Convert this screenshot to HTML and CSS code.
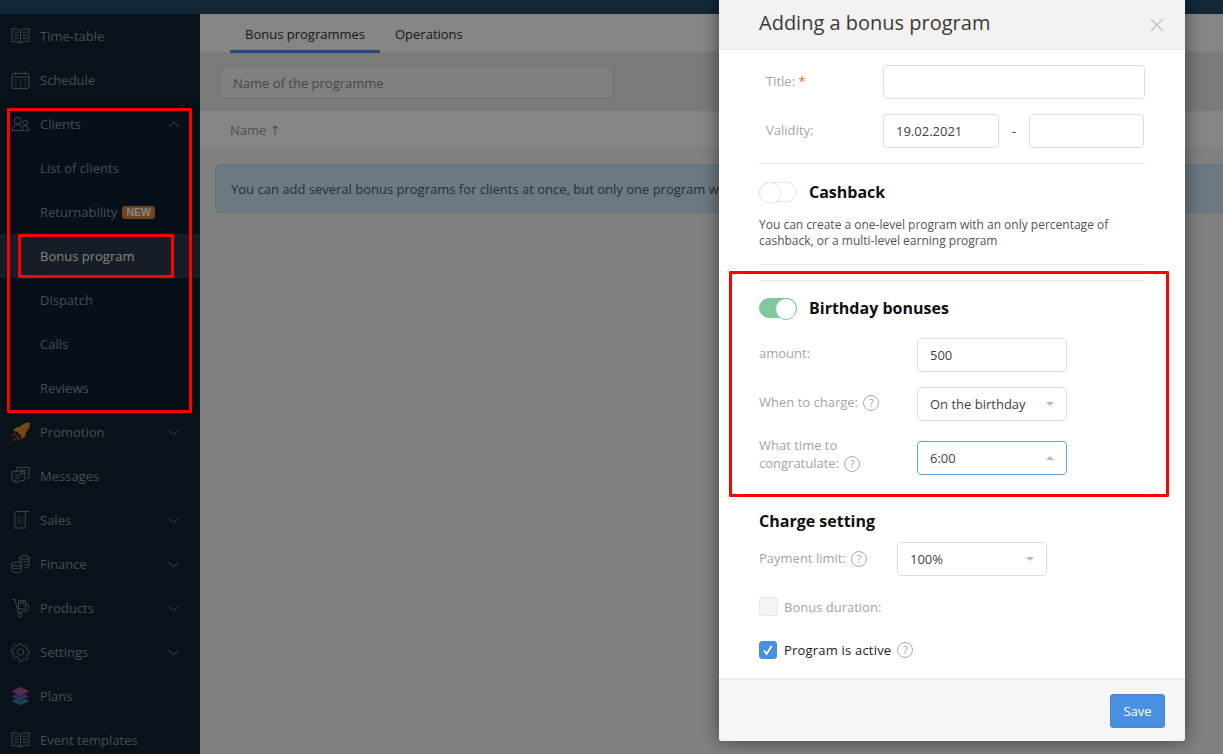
FILE: index.html
```html
<!DOCTYPE html>
<html lang="en">
<head>
    <meta charset="UTF-8">
    <title>Adding a bonus program</title>
    <link rel="stylesheet" href="styles.css">
</head>
<body>
    <div class="topbar"></div>
    <div class="layout">
        <nav class="sidebar">
            <a class="nav-item">
                <svg class="nav-icon" viewBox="0 0 20 18"><path d="M10 3C8 1.500 4 1 1 1.500V15c3-.5 7 0 9 1.500 2-1.500 6-2 9-1.500V1.500C16 1 12 1.500 10 3zM10 3v13.500M3 5h5M3 8h5M3 11h5M12 5h5M12 8h5M12 11h5"/></svg>
                <span>Time-table</span>
            </a>
            <a class="nav-item">
                <svg class="nav-icon" viewBox="0 0 20 20"><rect x="1" y="3" width="18" height="16" rx="2"/><path d="M1 7h18M5 1v4M15 1v4M4 10h2M9 10h2M14 10h2M4 13h2M9 13h2M14 13h2M4 16h2M9 16h2M14 16h2"/></svg>
                <span>Schedule</span>
            </a>
            <div class="nav-group">
                <a class="nav-item">
                    <svg class="nav-icon" viewBox="0 0 20 16"><circle cx="7" cy="4.500" r="3.500"/><path d="M1 15c0-4 2.500-6 6-6s6 2 6 6zM14 15h5c0-3-1.500-5-4-5-1 0-1.800.300-2.500.800"/><circle cx="15" cy="6.500" r="2.500"/></svg>
                    <span>Clients</span>
                    <svg class="chevron" viewBox="0 0 12 7"><path d="M1 6l5-5 5 5"/></svg>
                </a>
                <a class="nav-item">
                    <span>List of clients</span>
                </a>
                <a class="nav-item">
                    <span>Returnability</span>
                    <span class="badge">NEW</span>
                </a>
                <a class="nav-item active">
                    <span>Bonus program</span>
                </a>
                <a class="nav-item">
                    <span>Dispatch</span>
                </a>
                <a class="nav-item">
                    <span>Calls</span>
                </a>
                <a class="nav-item">
                    <span>Reviews</span>
                </a>
            </div>
            <a class="nav-item">
                <svg class="nav-icon rocket" viewBox="0 0 20 20"><path class="rocket-body" d="M20 0c-4.500 0-8 1.500-10.500 4.500L5.500 5 2 9l4 .5 4.500 4.500.5 4 4-3.500.5-4C18.500 8 20 4.500 20 0z"/><path class="rocket-tail" d="M5 11.500l-4 2.500M7.500 13.500l-5 6M9 15.500l-2.500 3.500"/></svg>
                <span>Promotion</span>
                <svg class="chevron" viewBox="0 0 12 7"><path d="M1 1l5 5 5-5"/></svg>
            </a>
            <a class="nav-item">
                <svg class="nav-icon" viewBox="0 0 20 20"><path d="M6 5V1h13v11h-3M3 5h11v10H8l-3 3v-3H1V5zM9 4h7M9 7h7M4 9h7M4 12h5"/></svg>
                <span>Messages</span>
            </a>
            <a class="nav-item">
                <svg class="nav-icon" viewBox="0 0 20 20"><path d="M19 1H6C4.500 1 4 2 4 3v16l2-1 1.500 1L9 18l1.500 1 1.500-1 1.500 1 1.500-1V3c0-1 1-2 2-2h2zM7 7h3M7 10h3M7 13h3M12 7h1M12 10h1M12 13h1"/></svg>
                <span>Sales</span>
                <svg class="chevron" viewBox="0 0 12 7"><path d="M1 1l5 5 5-5"/></svg>
            </a>
            <a class="nav-item">
                <svg class="nav-icon" viewBox="0 0 20 20"><ellipse cx="14" cy="3" rx="5" ry="2"/><path d="M9 3v3c0 1 2 2 5 2s5-1 5-2V3M19 6v3c0 1-2 2-5 2M19 9v3c0 1-2 2-5 2"/><ellipse cx="6" cy="10" rx="5" ry="2"/><path d="M1 10v7c0 1 2 2 5 2s5-1 5-2v-7M1 13c0 1 2 2 5 2s5-1 5-2"/></svg>
                <span>Finance</span>
                <svg class="chevron" viewBox="0 0 12 7"><path d="M1 1l5 5 5-5"/></svg>
            </a>
            <a class="nav-item">
                <svg class="nav-icon" viewBox="0 0 20 20"><path d="M1 1h3l4 14 11-3"/><circle cx="9" cy="17.500" r="2"/><path d="M8 2h7v9H8zM10 2v3h3V2M15 6h3l1 5"/></svg>
                <span>Products</span>
                <svg class="chevron" viewBox="0 0 12 7"><path d="M1 1l5 5 5-5"/></svg>
            </a>
            <a class="nav-item">
                <svg class="nav-icon" viewBox="0 0 20 20"><circle cx="10" cy="10" r="3.500"/><path d="M8.500 1h3l.5 2.500 2 .9 2.200-1.400 2 2-1.400 2.200.9 2 2.300.3v3l-2.300.5-.9 2 1.400 2.200-2 2-2.200-1.400-2 .9-.5 2.300h-3L8 16.500l-2-.9L3.800 17l-2-2 1.400-2.200-.9-2L0 10.500v-3l2.300-.3.9-2L1.800 3l2-2L6 3.400 8 2.500z" transform="translate(.5 .3) scale(.95)"/></svg>
                <span>Settings</span>
                <svg class="chevron" viewBox="0 0 12 7"><path d="M1 1l5 5 5-5"/></svg>
            </a>
            <a class="nav-item">
                <svg class="nav-icon plans" viewBox="0 0 20 20"><path class="layer-teal" d="M10 11l10 4-10 5-10-5z"/><path class="layer-blue" d="M10 6l10 4.500-10 5-10-5z"/><path class="layer-purple" d="M10 0l10 5-10 5.500L0 5z"/></svg>
                <span>Plans</span>
            </a>
            <a class="nav-item">
                <svg class="nav-icon" viewBox="0 0 20 18"><path d="M10 3C8 1.500 4 1 1 1.500V15c3-.5 7 0 9 1.500 2-1.500 6-2 9-1.500V1.500C16 1 12 1.500 10 3zM10 3v13.500M3 5h5M3 8h5M3 11h5M12 5h5M12 8h5M12 11h5"/></svg>
                <span>Event templates</span>
            </a>
        </nav>

        <main class="content">
            <div class="tabs">
                <a class="tab tab-active">Bonus programmes</a>
                <a class="tab">Operations</a>
            </div>
            <div class="filters">
                <input class="search" placeholder="Name of the programme">
            </div>
            <div class="table-head">Name <span class="sort-arrow">↑</span></div>
            <div class="alert">You can add several bonus programs for clients at once, but only one program w</div>
        </main>
    </div>

    <div class="backdrop"></div>

    <div class="marker marker-clients"></div>
    <div class="marker marker-bonus"></div>

    <section class="modal">
        <header class="modal-header">
            <h2>Adding a bonus program</h2>
            <svg class="close" viewBox="0 0 14 14"><path d="M1 1l12 12M13 1L1 13"/></svg>
        </header>
        <div class="modal-body">
            <div class="form-row">
                <label class="top-label">Title: <span class="required">*</span></label>
                <input class="field field-wide">
            </div>
            <div class="form-row row-validity">
                <label class="top-label">Validity:</label>
                <input class="field field-date" value="19.02.2021">
                <span class="dash">-</span>
                <input class="field field-date-to">
            </div>
            <hr class="divider">
            <div class="switch-row">
                <span class="toggle"></span>
                <h3>Cashback</h3>
            </div>
            <p class="hint">You can create a one-level program with an only percentage of cashback, or a multi-level earning program</p>
            <hr class="divider">
            <hr class="divider">
            <div class="switch-row switch-birthday">
                <span class="toggle toggle-on"></span>
                <h3>Birthday bonuses</h3>
            </div>
            <div class="form-row row-first">
                <label class="side-label">amount:</label>
                <input class="field field-mid" value="500">
            </div>
            <div class="form-row row-next">
                <label class="side-label">When to charge: <span class="help">?</span></label>
                <div class="select">On the birthday<span class="caret"></span></div>
            </div>
            <div class="form-row row-time">
                <label class="side-label label-double">What time to congratulate: <span class="help">?</span></label>
                <div class="select select-open">6:00<span class="caret caret-up"></span></div>
            </div>
            <h3 class="section-title">Charge setting</h3>
            <div class="form-row row-limit">
                <label class="side-label label-limit">Payment limit: <span class="help">?</span></label>
                <div class="select">100%<span class="caret"></span></div>
            </div>
            <div class="check-row check-duration">
                <span class="checkbox"></span>
                <span class="check-muted">Bonus duration:</span>
            </div>
            <div class="check-row check-active">
                <span class="checkbox checkbox-on">
                    <svg viewBox="0 0 18 18"><path d="M4.500 9.500l3 4 5.500-9"/></svg>
                </span>
                <span class="check-strong">Program is active</span>
                <span class="help">?</span>
            </div>
        </div>
        <footer class="modal-footer">
            <button class="btn-save">Save</button>
        </footer>
    </section>

    <div class="marker marker-birthday"></div>
</body>
</html>
```

FILE: styles.css
```css
* {
    box-sizing: border-box;
}
html, body {
    height: 100%;
}
body {
    margin: 0;
    overflow: hidden;
    background-color: #f6f6f6;
    color: #444;
    font-family: "Open Sans", sans-serif;
    font-size: 13px;
}
.topbar {
    height: 14px;
    background-color: #264b6a;
}
.layout {
    display: flex;
    height: 740px;
}

/* sidebar */
.sidebar {
    width: 200px;
    flex-shrink: 0;
    background-color: #11232f;
    overflow: hidden;
}
.nav-group {
    background-color: #0a2030;
}
.nav-item {
    display: flex;
    align-items: center;
    height: 44px;
    padding: 0 20px 0 40px;
    position: relative;
    color: #8a939c;
}
.nav-item.active {
    background-color: #2c3849;
    color: #f8f8ee;
}
.nav-icon {
    position: absolute;
    left: 11px;
    top: 12px;
    width: 19px;
    height: 20px;
    fill: none;
    stroke: #7d8a94;
    stroke-width: 1;
}
.rocket-body {
    fill: #e08a30;
    stroke: none;
}
.rocket-tail {
    stroke: #c04a30;
    stroke-width: 1.500;
}
.plans path {
    stroke: #11232f;
    stroke-width: .6;
}
.layer-purple {
    fill: #a3558f;
}
.layer-blue {
    fill: #5f5fb5;
}
.layer-teal {
    fill: #2f8fa8;
}
.chevron {
    width: 13px;
    height: 7px;
    margin-left: auto;
    fill: none;
    stroke: #7d8a94;
}
.badge {
    margin-left: 5px;
    padding: 0 4px;
    border-radius: 3px;
    background-color: #d4833e;
    color: #fff;
    font-family: "Liberation Sans", sans-serif;
    font-size: 10.500px;
    font-weight: bold;
    line-height: 13px;
}

/* content under the dialog */
.content {
    flex: 1;
    min-width: 0;
}
.tabs {
    display: flex;
    height: 39px;
    padding-left: 30px;
    background-color: #fff;
    border-bottom: 1px solid #eee;
}
.tab {
    height: 39px;
    padding: 0 15px;
    line-height: 40px;
    color: #333;
}
.tab-active {
    border-bottom: 3px solid #4a90e2;
}
.filters {
    height: 58px;
    padding: 13px 20px 0;
    background-color: #eaeae6;
}
.search {
    display: block;
    width: 393px;
    height: 33px;
    padding: 0 12px;
    background-color: #f6f6f4;
    border: 1px solid #dcdfe6;
    border-radius: 4px;
    font-family: inherit;
    font-size: 13px;
}
.search::placeholder {
    color: #888;
}
.table-head {
    height: 38px;
    padding-left: 30px;
    line-height: 38px;
    background-color: #fff;
    border-bottom: 1px solid #f2f2f2;
    color: #999;
}
.sort-arrow {
    font-family: "DejaVu Sans", sans-serif;
}
.alert {
    margin: 15px -5px 0 15px;
    height: 49px;
    padding: 0 15px;
    line-height: 49px;
    white-space: nowrap;
    overflow: hidden;
    background-color: #d2e9f5;
    border: 1px solid #bcdde9;
    border-radius: 4px;
    color: #31607f;
}

.backdrop {
    position: absolute;
    inset: 0;
    background-color: rgba(0, 0, 0, .48);
}

/* dialog */
.modal {
    position: absolute;
    top: 0;
    left: 719px;
    width: 466px;
    height: 741px;
    display: flex;
    flex-direction: column;
    background-color: #fff;
    border-radius: 0 0 3px 3px;
    box-shadow: 0 0 18px rgba(0, 0, 0, .5);
}
.modal-header {
    height: 50px;
    flex-shrink: 0;
    display: flex;
    align-items: center;
    justify-content: space-between;
    padding: 0 21px 4px 40px;
    background-color: #f3f2f1;
    border-bottom: 1px solid #e6e6e6;
}
.modal-header h2 {
    margin: 0;
    font-size: 20px;
    font-weight: 400;
    color: #3a3a3a;
}
.close {
    width: 14px;
    height: 14px;
    margin-top: 5px;
    fill: none;
    stroke: #c6c6c6;
    stroke-width: 1.500;
}
.modal-body {
    flex: 1;
    padding: 15px 40px 0;
}
.modal-footer {
    height: 63px;
    flex-shrink: 0;
    display: flex;
    justify-content: flex-end;
    padding: 14px 20px 0;
    background-color: #f6f6f6;
    border-top: 2px solid #e9eef2;
    border-radius: 0 0 3px 3px;
}
.btn-save {
    width: 55px;
    height: 34px;
    background-color: #4a90e2;
    border: 1px solid #4785cf;
    border-radius: 3px;
    color: #fff;
    font-family: inherit;
    font-size: 13px;
}

.form-row {
    display: flex;
    align-items: center;
}
.row-validity {
    margin-top: 15px;
}
.row-first {
    margin-top: 20px;
}
.row-next {
    margin-top: 15px;
}
.row-time {
    margin-top: 20px;
}
.row-limit {
    margin-top: 11px;
}
.top-label {
    width: 124px;
    padding: 0 0 2px 7px;
    color: #a2a6ad;
}
.required {
    color: #f26522;
}
.side-label {
    width: 158px;
    padding-bottom: 5px;
    line-height: 18px;
    color: #a2a6ad;
}
.label-double {
    margin: -6px 0;
    padding: 0 30px 8px 0;
}
.label-limit {
    width: 138px;
    padding-bottom: 3px;
}
.field {
    height: 34px;
    padding: 0 12px;
    background-color: #fff;
    border: 1px solid #d8dde6;
    border-radius: 4px;
    color: #444;
    font-family: inherit;
    font-size: 13px;
}
.field-wide {
    width: 262px;
}
.field-date {
    width: 116px;
}
.dash {
    width: 30px;
    text-align: center;
}
.field-date-to {
    width: 115px;
}
.field-mid {
    width: 150px;
}
.select {
    position: relative;
    width: 150px;
    height: 34px;
    padding: 0 12px;
    line-height: 32px;
    border: 1px solid #d8dde6;
    border-radius: 4px;
}
.select-open {
    border-color: #5fa6e6;
}
.caret {
    position: absolute;
    right: 12px;
    top: 14px;
    border-left: 4px solid transparent;
    border-right: 4px solid transparent;
    border-top: 4px solid #b4bccb;
}
.caret-up {
    top: 14px;
    border-top: 0;
    border-bottom: 4px solid #b4bccb;
}
.help {
    display: inline-block;
    width: 16px;
    height: 16px;
    margin-left: 2px;
    border: 1px solid #a9adb4;
    border-radius: 50%;
    color: #a2a6ad;
    font-size: 11px;
    line-height: 14px;
    text-align: center;
}
.divider {
    margin: 15px 0 0;
    border: 0;
    border-top: 1px solid #e8e8e8;
}
.switch-row {
    display: flex;
    align-items: center;
    gap: 12px;
    margin-top: 18px;
}
.switch-birthday {
    margin-top: 17px;
}
.switch-row h3, .section-title {
    margin: 0;
    font-size: 16px;
    font-weight: 700;
    line-height: 20px;
    color: #111;
}
.section-title {
    margin-top: 36px;
}
.toggle {
    position: relative;
    width: 38px;
    height: 20px;
    background-color: #fff;
    border: 1px solid #dfe3e8;
    border-radius: 10px;
}
.toggle::after {
    content: "";
    position: absolute;
    left: -1px;
    top: -1px;
    width: 20px;
    height: 20px;
    background-color: #fff;
    border: 1px solid #dfe3e8;
    border-radius: 50%;
}
.toggle-on {
    background-color: #7dcb9d;
    border-color: #7dcb9d;
}
.toggle-on::after {
    left: auto;
    right: -1px;
    border-color: #7dcb9d;
}
.hint {
    margin: 15px 0 0;
    font-size: 12px;
    line-height: 16px;
    color: #555;
}
.check-row {
    display: flex;
    align-items: center;
    gap: 6px;
    color: #222;
}
.check-duration {
    margin-top: 21px;
}
.check-active {
    margin-top: 25px;
}
.check-muted {
    color: #a2a6ad;
}
.check-strong {
    letter-spacing: .2px;
}
.check-active .help {
    margin-left: 0;
}
.checkbox {
    width: 19px;
    height: 19px;
    background-color: #f2f4f7;
    border: 1px solid #e4e7ec;
    border-radius: 3px;
}
.checkbox-on {
    width: 18px;
    height: 18px;
    margin-right: 1px;
    background-color: #4a90e2;
    border-color: #4a90e2;
}
.checkbox-on svg {
    display: block;
    width: 16px;
    height: 16px;
    fill: none;
    stroke: #fff;
    stroke-width: 2;
}

/* red marks drawn over the screenshot */
.marker {
    position: absolute;
    border: 3px solid #f00;
    border-radius: 1px;
}
.marker-clients {
    left: 7px;
    top: 108px;
    width: 185px;
    height: 305px;
}
.marker-bonus {
    left: 18px;
    top: 234px;
    width: 156px;
    height: 44px;
}
.marker-birthday {
    left: 729px;
    top: 271px;
    width: 440px;
    height: 226px;
}
```
